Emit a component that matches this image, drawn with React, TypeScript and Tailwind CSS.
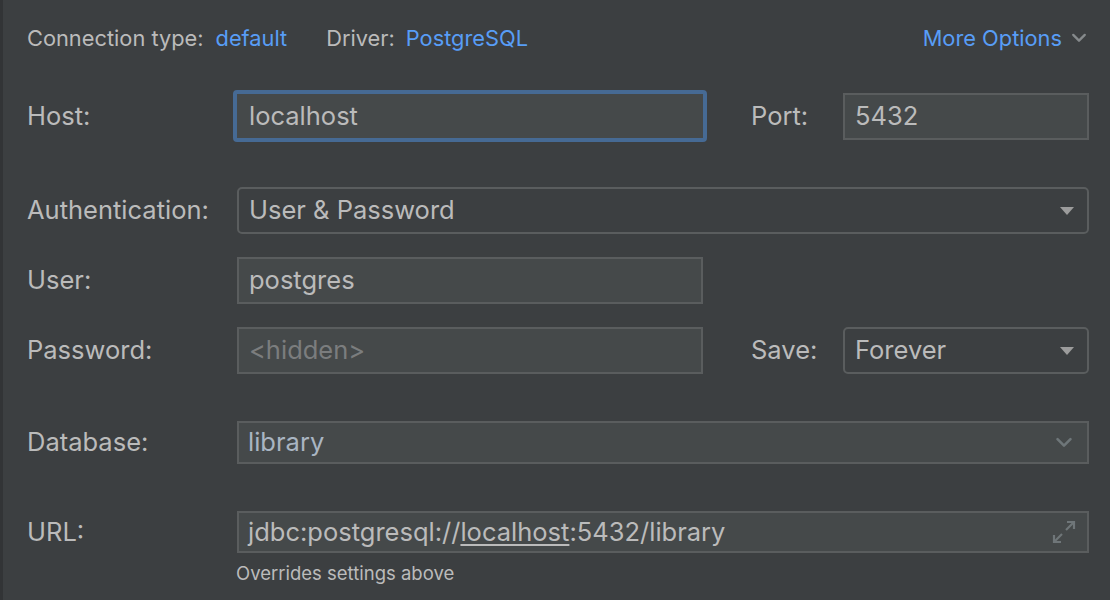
import React from "react";

const font = { fontFamily: "Inter, 'Liberation Sans', sans-serif" };

function Label({ children, className = "" }: { children: React.ReactNode; className?: string }) {
  return <div className={"text-[25.5px] text-[#bbbbbb] " + className}>{children}</div>;
}

function Triangle() {
  return (
    <svg width="16" height="10" viewBox="0 0 16 10" className="shrink-0">
      <path d="M1 1 L15 1 L8 9 Z" fill="#9c9c9c" />
    </svg>
  );
}

function ChevronDown({ color, size = 16 }: { color: string; size?: number }) {
  return (
    <svg width={size} height={size * 0.6} viewBox="0 0 16 10" className="shrink-0">
      <path d="M2 2 L8 8 L14 2" fill="none" stroke={color} strokeWidth="2.4" strokeLinecap="round" strokeLinejoin="round" />
    </svg>
  );
}

function ExpandIcon() {
  return (
    <svg width="26" height="26" viewBox="0 0 26 26" className="shrink-0">
      <g fill="none" stroke="#6f7679" strokeWidth="2.2">
        <path d="M15 11 L23 3" />
        <path d="M16 3 L23 3 L23 10" />
        <path d="M11 15 L3 23" />
        <path d="M3 16 L3 23 L10 23" />
      </g>
    </svg>
  );
}

export default function App() {
  return (
    <div style={font} className="w-[1110px] h-[600px] bg-[#3c3f41] flex overflow-hidden">
      <div className="w-[3px] bg-[#323436] shrink-0" />
      <div className="flex-1 pl-[24px] pr-[21px] flex flex-col">
        {/* top row */}
        <div className="flex items-center h-[38px] mt-[19px] text-[21.8px]">
          <span className="text-[#bbbbbb]">Connection type:</span>
          <span className="text-[#589df6] ml-[12px]">default</span>
          <span className="text-[#bbbbbb] ml-[39px]">Driver:</span>
          <span className="text-[#589df6] ml-[11px]">PostgreSQL</span>
          <div className="flex-1" />
          <span className="text-[#589df6]">More Options</span>
          <span className="ml-[9px] mr-[2px]">
            <ChevronDown color="#868a8c" size={16} />
          </span>
        </div>

        {/* Host / Port */}
        <div className="flex items-center mt-[33px] h-[52px]">
          <Label className="w-[206px]">Host:</Label>
          <div className="w-[474px] h-[52px] rounded-[4px] border-[4px] border-[#466a94] bg-[#45494a] flex items-center pl-[12px] text-[25.5px] text-[#bbbbbb]">
            localhost
          </div>
          <Label className="ml-[44px] w-[92px]">Port:</Label>
          <div className="flex-1 h-[47px] border-2 border-[#5a5d5e] bg-[#45494a] flex items-center pl-[10px] text-[25.5px] text-[#bbbbbb]">
            5432
          </div>
        </div>

        {/* Authentication */}
        <div className="flex items-center mt-[45px] h-[47px]">
          <Label className="w-[210px]">Authentication:</Label>
          <div className="flex-1 h-[47px] rounded-[5px] border-2 border-[#5a5d5e] bg-[#3c3f41] flex items-center pl-[10px] pr-[12px] text-[25.5px] text-[#bbbbbb]">
            <span className="flex-1">User &amp; Password</span>
            <Triangle />
          </div>
        </div>

        {/* User */}
        <div className="flex items-center mt-[23px] h-[47px]">
          <Label className="w-[210px]">User:</Label>
          <div className="w-[466px] h-[47px] border-2 border-[#5a5d5e] bg-[#45494a] flex items-center pl-[10px] text-[25.5px] text-[#bbbbbb]">
            postgres
          </div>
        </div>

        {/* Password / Save */}
        <div className="flex items-center mt-[23px] h-[47px]">
          <Label className="w-[210px]">Password:</Label>
          <div className="w-[466px] h-[47px] border-2 border-[#5a5d5e] bg-[#45494a] flex items-center pl-[10px] text-[25.5px] text-[#7b7d7e]">
            &lt;hidden&gt;
          </div>
          <Label className="ml-[48px] w-[92px]">Save:</Label>
          <div className="flex-1 h-[47px] rounded-[5px] border-2 border-[#5a5d5e] bg-[#3c3f41] flex items-center pl-[10px] pr-[12px] text-[25.5px] text-[#bbbbbb]">
            <span className="flex-1">Forever</span>
            <Triangle />
          </div>
        </div>

        {/* Database */}
        <div className="flex items-center mt-[47px] h-[43px]">
          <Label className="w-[210px]">Database:</Label>
          <div className="flex-1 h-[43px] border-2 border-[#5a5d5e] bg-[#45494a] flex items-center pl-[9px] pr-[14px] text-[25.5px] text-[#a9b5c2]">
            <span className="flex-1">library</span>
            <ChevronDown color="#6e7679" size={18} />
          </div>
        </div>

        {/* URL */}
        <div className="flex items-center mt-[47px] h-[42px]">
          <Label className="w-[210px]">URL:</Label>
          <div className="flex-1 h-[42px] border-2 border-[#5a5d5e] bg-[#45494a] flex items-center pl-[9px] pr-[10px] text-[25.5px] text-[#bbbbbb]">
            <span className="flex-1">
              jdbc:postgresql://<span className="underline underline-offset-[3px]">localhost</span>:5432/library
            </span>
            <ExpandIcon />
          </div>
        </div>
        <div className="ml-[209px] mt-[7px] text-[18.5px] text-[#bbbbbb]">Overrides settings above</div>
      </div>
    </div>
  );
}
